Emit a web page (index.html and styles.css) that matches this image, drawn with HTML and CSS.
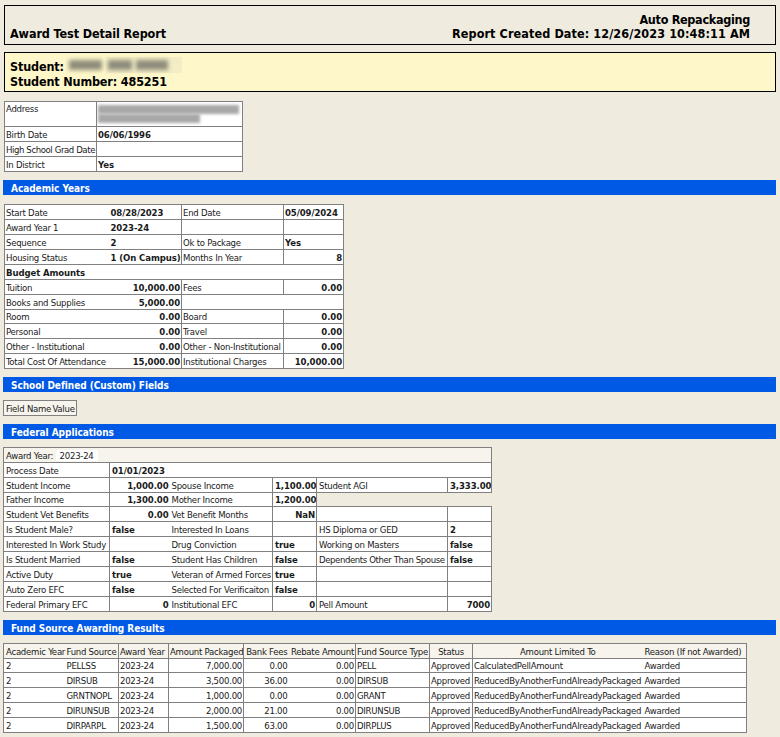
FILE: index.html
```html
<!doctype html>
<html lang="en">
<head>
<meta charset="utf-8">
<title>Award Test Detail Report</title>
<link rel="stylesheet" href="styles.css">
</head>
<body>
<div class="report-head">
  <div class="report-title">Award Test Detail Report</div>
  <div class="report-meta"><div class="meta-top">Auto Repackaging</div><div class="meta-date">Report Created Date: 12/26/2023 10:48:11 AM</div></div>
</div>
<div class="student-box">
  <div class="student-line">Student: <span class="blur-name"><span class="part"><i></i></span><span class="part light"><i></i><i></i></span></span></div>
  <div>Student Number: 485251</div>
</div>

<table class="grid info">
  <colgroup><col class="c1"><col class="c2"></colgroup>
  <tr class="addr"><td>Address</td><td><div class="blur-addr"><i></i><i></i></div></td></tr>
  <tr><td>Birth Date</td><td class="v">06/06/1996</td></tr>
  <tr><td class="tight">High School Grad Date</td><td></td></tr>
  <tr><td>In District</td><td class="v">Yes</td></tr>
</table>

<div class="bar bar-academic">Academic Years</div>
<table class="grid academic">
  <colgroup><col class="c1"><col class="c2"><col class="c3"><col class="c4"></colgroup>
  <tr><td class="nr">Start Date</td><td class="v nl">08/28/2023</td><td>End Date</td><td class="v">05/09/2024</td></tr>
  <tr><td class="nr">Award Year 1</td><td class="v nl">2023-24</td><td></td><td></td></tr>
  <tr><td class="nr">Sequence</td><td class="v nl">2</td><td>Ok to Package</td><td class="v">Yes</td></tr>
  <tr><td class="nr">Housing Status</td><td class="v nl">1 (On Campus)</td><td>Months In Year</td><td class="v r">8</td></tr>
  <tr><td colspan="4" class="v">Budget Amounts</td></tr>
  <tr><td class="nr">Tuition</td><td class="v r nl">10,000.00</td><td>Fees</td><td class="v r">0.00</td></tr>
  <tr><td class="nr">Books and Supplies</td><td class="v r nl">5,000.00</td><td colspan="2"></td></tr>
  <tr class="short"><td class="nr">Room</td><td class="v r nl">0.00</td><td>Board</td><td class="v r">0.00</td></tr>
  <tr><td class="nr">Personal</td><td class="v r nl">0.00</td><td>Travel</td><td class="v r">0.00</td></tr>
  <tr><td class="nr">Other - Institutional</td><td class="v r nl">0.00</td><td>Other - Non-Institutional</td><td class="v r">0.00</td></tr>
  <tr><td class="nr">Total Cost Of Attendance</td><td class="v r nl">15,000.00</td><td>Institutional Charges</td><td class="v r">10,000.00</td></tr>
</table>

<div class="bar">School Defined (Custom) Fields</div>
<table class="grid custom">
  <colgroup><col class="c1"><col class="c2"></colgroup>
  <tr class="head"><td class="nr">Field Name</td><td class="nl">Value</td></tr>
</table>

<div class="bar">Federal Applications</div>
<table class="grid federal">
  <colgroup><col class="c1"><col class="c2"><col class="c3"><col class="c4"><col class="c5"><col class="c6"></colgroup>
  <tr class="head"><td colspan="6">Award Year: <span class="year">2023-24</span></td></tr>
  <tr><td>Process Date</td><td colspan="5" class="v">01/01/2023</td></tr>
  <tr><td>Student Income</td><td class="v r nr">1,000.00</td><td class="nl">Spouse Income</td><td class="v r">1,100.00</td><td>Student AGI</td><td class="v r">3,333.00</td></tr>
  <tr class="short"><td>Father Income</td><td class="v r nr">1,300.00</td><td class="nl">Mother Income</td><td class="v r">1,200.00</td><td colspan="2" class="gap"></td></tr>
  <tr><td>Student Vet Benefits</td><td class="v r nr">0.00</td><td class="nl">Vet Benefit Months</td><td class="v r">NaN</td><td></td><td></td></tr>
  <tr><td>Is Student Male?</td><td class="v nr">false</td><td class="nl">Interested In Loans</td><td></td><td>HS Diploma or GED</td><td class="v">2</td></tr>
  <tr><td>Interested In Work Study</td><td class="nr"></td><td class="nl">Drug Conviction</td><td class="v">true</td><td>Working on Masters</td><td class="v">false</td></tr>
  <tr><td>Is Student Married</td><td class="v nr">false</td><td class="nl">Student Has Children</td><td class="v">false</td><td class="tight">Dependents Other Than Spouse</td><td class="v">false</td></tr>
  <tr><td>Active Duty</td><td class="v nr">true</td><td class="nl">Veteran of Armed Forces</td><td class="v">true</td><td></td><td></td></tr>
  <tr><td>Auto Zero EFC</td><td class="v nr">false</td><td class="nl">Selected For Verificaiton</td><td class="v">false</td><td></td><td></td></tr>
  <tr><td>Federal Primary EFC</td><td class="v r nr">0</td><td class="nl">Institutional EFC</td><td class="v r">0</td><td>Pell Amount</td><td class="v r">7000</td></tr>
</table>

<div class="bar">Fund Source Awarding Results</div>
<table class="grid fund">
  <colgroup><col class="c1"><col class="c2"><col class="c3"><col class="c4"><col class="c5"><col class="c6"><col class="c7"><col class="c8"><col class="c9"><col class="c10"></colgroup>
  <tr class="head"><td class="nr">Academic Year</td><td class="nl">Fund Source</td><td>Award Year</td><td>Amount Packaged</td><td class="nr r">Bank Fees</td><td class="nl r">Rebate Amount</td><td>Fund Source Type</td><td class="c">Status</td><td class="nr c">Amount Limited To</td><td class="nl">Reason (If not Awarded)</td></tr>
  <tr class="short"><td class="nr">2</td><td class="nl">PELLSS</td><td>2023-24</td><td class="r">7,000.00</td><td class="nr r">0.00</td><td class="nl r">0.00</td><td>PELL</td><td>Approved</td><td class="nr">CalculatedPellAmount</td><td class="nl">Awarded</td></tr>
  <tr><td class="nr">2</td><td class="nl">DIRSUB</td><td>2023-24</td><td class="r">3,500.00</td><td class="nr r">36.00</td><td class="nl r">0.00</td><td>DIRSUB</td><td>Approved</td><td class="nr">ReducedByAnotherFundAlreadyPackaged</td><td class="nl">Awarded</td></tr>
  <tr><td class="nr">2</td><td class="nl">GRNTNOPL</td><td>2023-24</td><td class="r">1,000.00</td><td class="nr r">0.00</td><td class="nl r">0.00</td><td>GRANT</td><td>Approved</td><td class="nr">ReducedByAnotherFundAlreadyPackaged</td><td class="nl">Awarded</td></tr>
  <tr><td class="nr">2</td><td class="nl">DIRUNSUB</td><td>2023-24</td><td class="r">2,000.00</td><td class="nr r">21.00</td><td class="nl r">0.00</td><td>DIRUNSUB</td><td>Approved</td><td class="nr">ReducedByAnotherFundAlreadyPackaged</td><td class="nl">Awarded</td></tr>
  <tr><td class="nr">2</td><td class="nl">DIRPARPL</td><td>2023-24</td><td class="r">1,500.00</td><td class="nr r">63.00</td><td class="nl r">0.00</td><td>DIRPLUS</td><td>Approved</td><td class="nr">ReducedByAnotherFundAlreadyPackaged</td><td class="nl">Awarded</td></tr>
</table>
</body>
</html>
```
FILE: styles.css
```css
html { background: #efebdf; }
body {
  margin: 0;
  padding: 5px 4px 0 3px;
  color: #1a1a1a;
  background: #efebdf;
  font-family: "DejaVu Sans", sans-serif;
  font-stretch: condensed;
  font-size: 9.5px;
  letter-spacing: -0.25px;
  overflow: hidden;
}

.report-head {
  height: 40px;
  box-sizing: border-box;
  margin-left: 1px;
  padding: 0 25px 3px 5px;
  border: 1px solid #000;
  display: flex;
  justify-content: space-between;
  align-items: flex-end;
  color: #000;
  font-size: 12.5px;
  font-weight: bold;
  line-height: 14px;
  letter-spacing: 0;
}
.report-title { letter-spacing: -0.1px; }
.report-meta { text-align: right; }
.meta-top { letter-spacing: -0.3px; }
.meta-date { letter-spacing: 0.1px; }

.student-box {
  height: 40px;
  box-sizing: border-box;
  margin: 7px 0 9px 1px;
  padding: 6px 5px 0;
  background: #fdf7c9;
  border: 1px solid #000;
  color: #000;
  font-size: 12.5px;
  font-weight: bold;
  line-height: 15px;
  letter-spacing: -0.15px;
}
.student-line { display: flex; gap: 3px; }
.blur-name { display: flex; gap: 2px; margin-top: -2px; height: 16px; }
.blur-name .part { display: flex; align-items: center; gap: 4px; padding: 0 2px; }
.blur-name .part.light { background: #f3edc6; padding: 0 14px 0 2px; }
.blur-name i { display: block; height: 10px; width: 33px; background: #8f8d7c; filter: blur(2px); }
.blur-name .light i { width: 24px; }
.blur-name .light i:last-child { width: 32px; }

.grid {
  border-collapse: collapse;
  table-layout: fixed;
  margin-left: 1px;
}
.grid td {
  border: 1px solid #808080;
  background: #fff;
  height: 14px;
  padding: 0 1px;
  line-height: 13px;
  vertical-align: middle;
  white-space: nowrap;
  overflow: hidden;
}
.grid .short td { height: 13px; }
.grid .v { font-weight: bold; font-size: 9.5px; letter-spacing: -0.1px; }
.grid .r { text-align: right; }
.grid .c { text-align: center; }
.grid .nr { border-right: 0; }
.grid .nl { border-left: 0; }
.grid .gap { background: transparent; border-right: 0; }
.grid .head td { background: #f6f4ec; }
.grid .tight { letter-spacing: -0.4px; }

.bar {
  height: 15px;
  margin: 8px 0;
  padding-left: 8px;
  background: #0059e5;
  color: #fff;
  font-size: 10px;
  font-weight: bold;
  line-height: 17px;
  letter-spacing: -0.05px;
}
.bar-academic { margin-bottom: 9px; }

.info { width: 238px; }
.info .c1 { width: 92px; }
.info .c2 { width: 146px; }
.info .addr td { height: 24px; vertical-align: top; }
.blur-addr i { display: block; height: 9px; background: #a8a8a8; filter: blur(1.5px); }
.blur-addr i:first-child { width: 141px; margin-top: 3px; }
.blur-addr i:last-child { width: 102px; }

.academic { width: 339px; }
.academic .c1 { width: 105px; }
.academic .c2 { width: 72px; }
.academic .c3 { width: 102px; }
.academic .c4 { width: 60px; }

.custom { margin-left: 0; width: 73px; }
.custom .c1 { width: 48px; }
.custom .c2 { width: 25px; }
.custom td:first-child { padding-left: 2px; }

.federal { width: 488px; margin-left: 0; }
.federal .c1 { width: 106px; }
.federal .c2 { width: 60px; }
.federal .c3 { width: 103px; }
.federal .c4 { width: 44px; }
.federal .c5 { width: 131px; }
.federal .c6 { width: 44px; }
.federal td { padding-left: 2px; }
.year { background: #fff; padding: 0 4px; }

.fund { width: 743px; margin-left: 0; }
.fund .c1 { width: 62px; }
.fund .c2 { width: 53px; }
.fund .c3 { width: 50px; }
.fund .c4 { width: 75px; }
.fund .c5 { width: 45px; }
.fund .c6 { width: 67px; }
.fund .c7 { width: 74px; }
.fund .c8 { width: 43px; }
.fund .c9 { width: 170px; }
.fund .c10 { width: 104px; }
.fund td:first-child { padding-left: 2px; }
.fund td:last-child { padding-left: 2px; }
```
